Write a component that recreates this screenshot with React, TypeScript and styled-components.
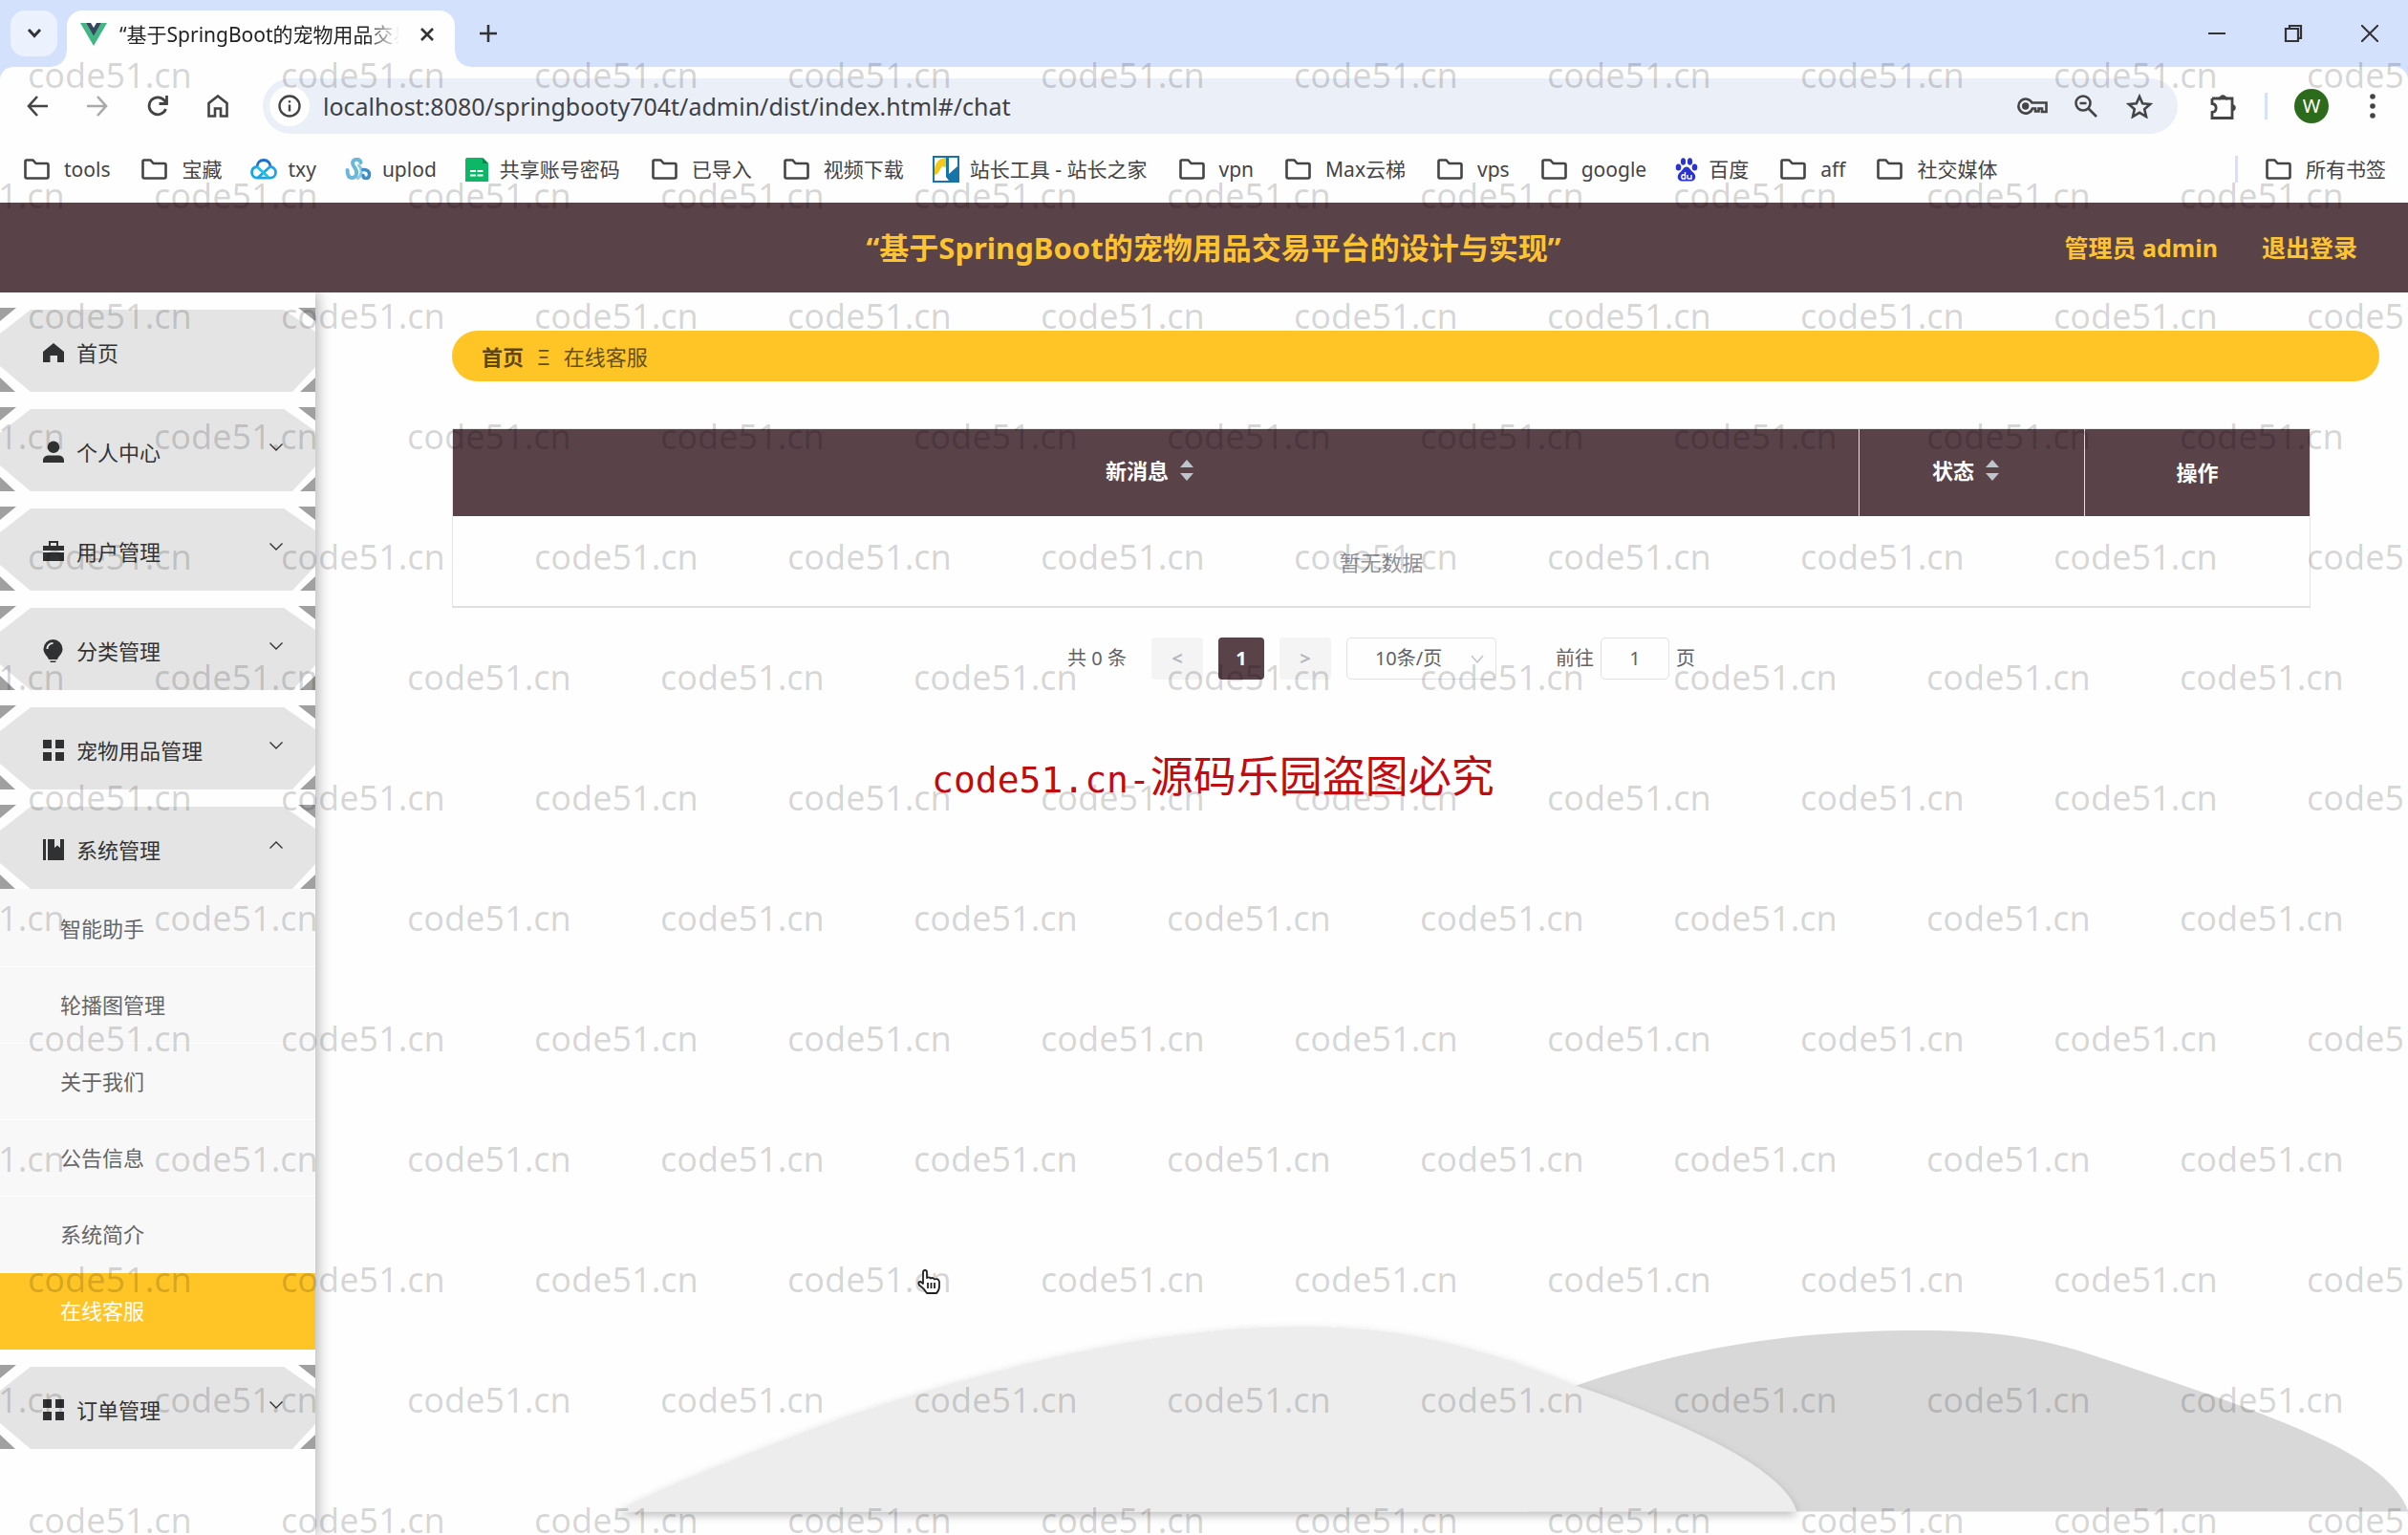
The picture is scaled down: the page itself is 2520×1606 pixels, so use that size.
import React from "react";
import styled, { createGlobalStyle, css } from "styled-components";

const plum = "#5a4249";
const gold = "#ffc526";

const GlobalStyle = createGlobalStyle`
  * { box-sizing: border-box; }
  body {
    margin: 0;
    background: #fefefe;
    font-family: "Noto Sans", "Noto Sans CJK SC", sans-serif;
    font-size: 22px;
    line-height: 32px;
    color: #333;
  }
  button, input, select { font: inherit; color: inherit; }
  button { padding: 0; border: 0; background: none; }
  a { color: inherit; text-decoration: none; }
  ul { margin: 0; padding: 0; list-style: none; }
  svg { display: block; flex: none; }
`;

const Page = styled.div`
  position: relative;
  display: flex;
  flex-direction: column;
  min-height: 100vh;
  overflow: hidden;
`;

/* ---------- browser chrome ---------- */

const TabStrip = styled.div`
  display: flex;
  align-items: flex-start;
  height: 70px;
  padding: 11px 0 0 11px;
  background: #d3e1fc;
`;

const TabSearch = styled.button`
  display: grid;
  place-items: center;
  width: 49px;
  height: 48px;
  margin-right: 10px;
  border-radius: 15px;
  background: #ebf2fe;
`;

const Tab = styled.div`
  position: relative;
  display: flex;
  align-items: center;
  width: 406px;
  height: 59px;
  padding: 0 18px 10px 14px;
  border-radius: 16px 16px 0 0;
  background: #fefefe;

  &::before, &::after {
    content: "";
    position: absolute;
    bottom: 0;
    width: 16px;
    height: 16px;
  }
  &::before {
    left: -16px;
    background: radial-gradient(circle at 0 0, transparent 15px, #fefefe 16px);
  }
  &::after {
    right: -16px;
    background: radial-gradient(circle at 100% 0, transparent 15px, #fefefe 16px);
  }
`;

const TabTitle = styled.span`
  flex: 1;
  margin: 0 18px 0 13px;
  overflow: hidden;
  white-space: nowrap;
  font-size: 21px;
  color: #222;
  mask-image: linear-gradient(90deg, #000 88%, transparent);
`;

const StripButton = styled.button`
  display: grid;
  place-items: center;
  width: ${(p: { $w: number }) => p.$w}px;
  height: 48px;
`;

const WindowControls = styled.div`
  display: flex;
  margin-left: auto;
`;

const ToolbarBack = styled.div`
  background: linear-gradient(#d3e1fc 20px, #fefefe 20px);
`;

const Toolbar = styled.div`
  display: flex;
  align-items: center;
  height: 82px;
  padding: 0 6px 0 7px;
  border-radius: 14px 14px 0 0;
  background: #fefefe;
  color: #444;
`;

const ToolButton = styled.button`
  display: grid;
  place-items: center;
  width: 63px;
  height: 48px;
`;

const Omnibox = styled.div`
  display: flex;
  flex: 1;
  align-items: center;
  height: 58px;
  margin: 0 16px;
  padding: 0 12px 0 7px;
  border-radius: 29px;
  background: #ebeff8;
`;

const SiteInfo = styled.button`
  display: grid;
  place-items: center;
  width: 42px;
  height: 42px;
  border-radius: 50%;
  background: #fefefe;
`;

const UrlInput = styled.input`
  flex: 1;
  min-width: 0;
  height: 48px;
  padding: 0 0 0 14px;
  border: 0;
  outline: 0;
  background: none;
  font-size: 25px;
  color: #3f4145;
`;

const OmniButton = styled.button`
  display: grid;
  place-items: center;
  width: 56px;
  height: 48px;
`;

const Divider = styled.span`
  width: 3px;
  height: 28px;
  background: #d3e1fc;
`;

const ProfileGroup = styled.div`
  display: flex;
  align-items: center;
  margin-left: 12px;
`;

const Avatar = styled.button`
  width: 36px;
  height: 36px;
  margin: 0 14px 0 28px;
  border-radius: 50%;
  background: #2c6a1c;
  color: #fff;
  font-size: 20px;
  line-height: 36px;
`;

const Bookmarks = styled.nav`
  display: flex;
  align-items: center;
  gap: 30px;
  height: 60px;
  padding: 0 23px 10px 22px;
  background: #fefefe;
`;

const Bookmark = styled.a<{ $folder?: boolean }>`
  display: flex;
  align-items: center;
  gap: 11px;
  font-size: 21px;
  white-space: nowrap;
  color: #444;
  ${(p) => p.$folder && css`
    gap: 15px;
    padding-left: 3px;
  `}
`;

const AllBookmarks = styled.div`
  display: flex;
  align-items: center;
  gap: 26px;
  margin-left: auto;
`;

/* ---------- application ---------- */

const AppHeader = styled.header`
  display: grid;
  grid-template-columns: 1fr auto 1fr;
  align-items: center;
  height: 94px;
  padding: 0 53px 0 73px;
  background: ${plum};
  color: #fcc431;
`;

const AppTitle = styled.h1`
  grid-column: 2;
  margin: 0;
  font-size: 31px;
  line-height: 44px;
  font-weight: 700;
`;

const UserLinks = styled.div`
  display: flex;
  justify-content: flex-end;
  gap: 46px;
  font-size: 25px;
  font-weight: 700;
`;

const Body = styled.div`
  display: flex;
  flex: 1;
`;

const Sidebar = styled.nav`
  position: relative;
  flex: none;
  width: 330px;
  background: #fefefe;
  box-shadow: 2px 0 14px rgba(0, 0, 0, 0.32);
  clip-path: inset(0 -30px 0 0);
`;

const MenuButton = styled.button`
  position: relative;
  display: flex;
  align-items: center;
  width: 100%;
  height: 88px;
  margin-top: 16px;
  padding: 6px 34px 0 44px;
  text-align: left;
`;

const PlateSvg = styled.svg`
  position: absolute;
  inset: 0;
  width: 100%;
  height: 100%;
`;

const MenuLabel = styled.span`
  position: relative;
  flex: 1;
  margin-left: 12px;
`;

const MenuIcon = styled.svg`
  position: relative;
  width: 24px;
  height: 24px;
`;

const MenuArrow = styled.svg<{ $open?: boolean }>`
  position: relative;
  width: 14px;
  height: 8px;
  margin-bottom: 10px;
  transform: ${(p) => (p.$open ? "rotate(180deg)" : "none")};
`;

const SubMenu = styled.ul`
  padding-top: 2px;
  background: #f8f8f8;
`;

const SubLink = styled.a<{ $active?: boolean }>`
  display: block;
  height: 80px;
  padding-left: 63px;
  line-height: 78px;
  border-bottom: 1px solid ${(p) => (p.$active ? gold : "#fefefe")};
  background: ${(p) => (p.$active ? gold : "transparent")};
  color: ${(p) => (p.$active ? "#fff" : "#666")};
`;

const Main = styled.main`
  display: flex;
  flex: 1;
  flex-direction: column;
`;

const Content = styled.div`
  padding: 40px 30px 0 143px;
`;

const Breadcrumb = styled.nav`
  display: flex;
  align-items: center;
  gap: 14px;
  height: 53px;
  padding: 0 31px;
  border-radius: 27px;
  background: ${gold};
  color: #66501f;
`;

const CrumbHome = styled.a`
  font-weight: 700;
  color: #614512;
`;

const Listing = styled.section`
  margin: 49px 72px 0 0;
`;

const Table = styled.table`
  width: 100%;
  table-layout: fixed;
  border-collapse: collapse;
  border: 1px solid #e6e6e6;
  border-bottom: 2px solid #e0e0e0;
`;

const HeadCell = styled.th`
  width: ${(p: { $w?: string }) => p.$w ?? "auto"};
  height: 91px;
  padding: 0;
  background: ${plum};
  color: #fff;
  font-weight: 700;
  & + & { border-left: 1px solid #e6e0e1; }
`;

const SortButton = styled.button`
  display: inline-flex;
  align-items: center;
  gap: 12px;
  padding: 0 13px 4px 0;
  font-weight: 700;
`;

const EmptyCell = styled.td`
  height: 95px;
  padding: 2px 0 0;
  text-align: center;
  color: #909399;
`;

const Pagination = styled.div`
  display: flex;
  align-items: center;
  justify-content: center;
  gap: 16px;
  margin-top: 31px;
  font-size: 20px;
  color: #606266;
`;

const Total = styled.span`
  margin-right: 10px;
`;

const PageButton = styled.button<{ $active?: boolean }>`
  display: grid;
  place-items: center;
  width: ${(p) => (p.$active ? 48 : 54)}px;
  height: 44px;
  border-radius: 4px;
  background: ${(p) => (p.$active ? plum : "#f4f4f5")};
  color: ${(p) => (p.$active ? "#fff" : "#b4b7bd")};
  font-weight: 700;
`;

const SizeBox = styled.label`
  position: relative;
  display: block;
  & > svg {
    position: absolute;
    right: 13px;
    top: 18px;
  }
`;

const SizeSelect = styled.select`
  appearance: none;
  width: 157px;
  height: 44px;
  padding: 0 0 0 29px;
  border: 1px solid #dfe1e6;
  border-radius: 5px;
  background: #fefefe;
`;

const Jump = styled.label`
  display: flex;
  align-items: center;
  gap: 7px;
  margin-left: 46px;
`;

const JumpInput = styled.input`
  width: 72px;
  height: 44px;
  padding: 0;
  border: 1px solid #dfe1e6;
  border-radius: 5px;
  background: #fefefe;
  text-align: center;
`;

const Hills = styled.svg`
  width: 86%;
  height: auto;
  margin-top: auto;
  align-self: flex-end;
`;

/* ---------- overlays ---------- */

const WatermarkLayer = styled.div`
  position: absolute;
  inset: 52px 0 0;
  overflow: hidden;
  pointer-events: none;
  user-select: none;
`;

const WatermarkRow = styled.div<{ $shift: boolean }>`
  display: flex;
  height: 126px;
  margin-left: ${(p) => (p.$shift ? -104 : 29)}px;
  font-size: 36px;
  line-height: 54px;
  color: rgba(0, 0, 0, 0.16);
  & > span { flex: 0 0 265px; }
`;

const Notice = styled.div`
  position: absolute;
  top: 782px;
  left: 975px;
  display: flex;
  align-items: baseline;
  font-size: 45px;
  line-height: 60px;
  white-space: nowrap;
  color: #c30a0f;
  pointer-events: none;
`;

const NoticeLatin = styled.span`
  font-family: "DejaVu Sans Mono", monospace;
  font-size: 38px;
`;

const HandPointer = styled.svg`
  position: absolute;
  top: 1327px;
  left: 959px;
`;

const stroke = { fill: "none", stroke: "currentColor" } as const;

const FolderIcon = () => (
  <svg width="27" height="22" viewBox="0 0 27 22" {...stroke} strokeWidth="2.6" strokeLinejoin="round">
    <path d="M1.5 19V2.8Q1.5 1.5 2.8 1.5H9.5L12.5 5H24Q25.5 5 25.5 6.5V19Q25.5 20.5 24 20.5H3Q1.5 20.5 1.5 19Z" />
  </svg>
);

const CloudIcon = () => (
  <svg width="28" height="22" viewBox="0 0 28 22" fill="none" strokeWidth="2.800" strokeLinejoin="round">
    <path d="M7 9C7 4 10 1.500 14 1.500S21 4.500 21 8.500" stroke="#1b6fd0" />
    <path d="M7 8.500C3 9 1.500 11.500 1.500 14.200c0 3.600 2.500 6 6 6L20.500 8.500c3.500 0 6 2.400 6 5.900 0 3.400-2.500 5.800-6 5.800h-13" stroke="#1aa5e8" />
    <path d="M7 8.500 19 19.500" stroke="#22bfe6" />
  </svg>
);

const UpIcon = () => (
  <svg width="28" height="24" viewBox="0 0 28 24" fill="none" strokeWidth="4" strokeLinecap="round">
    <path d="M2.500 13c0 5 1.500 8 5 8s5-3 4.500-7C11.500 10.500 8 9 8 5.500 8 1 15.500.5 16.500 5" stroke="#6bb7dc" />
    <path d="M14.500 8c2 2 3 5 2.500 8-.3 2.500-1.500 4-3.500 5.500" stroke="#8cc8e4" strokeWidth="3" />
    <path d="M19 12.500c4-.5 6.500 2 6.500 5 0 2.500-1.500 4-3.500 4s-3-1.200-3-3" stroke="#3d8fc8" strokeWidth="3.500" />
  </svg>
);

const SheetIcon = () => (
  <svg width="25" height="25" viewBox="0 0 25 25">
    <path d="M2 0H18L24 6V25H0V2Q0 0 2 0Z" fill="#0cb767" />
    <path d="M18 0 24 6H18Z" fill="#05884a" />
    <path d="M5 13h6v2H5zM12.500 13h6v2h-6zM5 17.500h6v2H5zM12.500 17.500h6v2h-6z" fill="#fff" />
  </svg>
);

const ZhanIcon = () => (
  <svg width="28" height="28" viewBox="0 0 28 28">
    <path d="M1 1H27V27H1Z" fill="#fff" stroke="#1674a8" strokeWidth="2" />
    <path d="M2 14C3 6 8 2 14 2V12L10 11 5 19 2 20Z" fill="#f2c81b" />
    <path d="M14 2H17V19L26 11V26H17L14 22Z" fill="#1674a8" />
  </svg>
);

const BaiduIcon = () => (
  <svg width="24" height="25" viewBox="0 0 24 25" fill="#2b32d4">
    <ellipse cx="3.500" cy="10" rx="2.800" ry="3.500" />
    <ellipse cx="8.500" cy="4" rx="2.600" ry="3.800" />
    <ellipse cx="15.500" cy="4" rx="2.600" ry="3.800" />
    <ellipse cx="20.500" cy="10" rx="2.800" ry="3.500" />
    <path d="M12 9.500c3 0 4 3.500 6.500 5.500 5 4 2.500 9.500-1.500 9.500H7c-4 0-6.500-5.500-1.500-9.500C8 13 9 9.500 12 9.500Z" />
    <path d="M10.500 15v7H7.500q-1.500-2 0-4h3M13 18v3q0 1 1 1h3v-4" fill="none" stroke="#fff" strokeWidth="1.500" />
  </svg>
);

type BookmarkEntry = { label: string; icon?: () => React.ReactElement };

const bookmarks: BookmarkEntry[] = [
  { label: "tools" },
  { label: "宝藏" },
  { label: "txy", icon: CloudIcon },
  { label: "uplod", icon: UpIcon },
  { label: "共享账号密码", icon: SheetIcon },
  { label: "已导入" },
  { label: "视频下载" },
  { label: "站长工具 - 站长之家", icon: ZhanIcon },
  { label: "vpn" },
  { label: "Max云梯" },
  { label: "vps" },
  { label: "google" },
  { label: "百度", icon: BaiduIcon },
  { label: "aff" },
  { label: "社交媒体" },
];

const homePath = "M12 2 23 11V22H16V15H8.500V22H1V11Z";
const userPath = "M12 0.500a6 6 0 0 1 0 12.500a6 6 0 0 1 0-12.500ZM1 23v-2c0-4 3-5.500 6-5.500h10c3 0 6 1.500 6 5.500v2Z";
const casePath = "M7 6V1H17V6H23V11H1V6ZM9 6h6V3H9ZM1 13H23V22H1Z";
const bulbPath = "M11.500 0a10 10 0 0 1 10 10c0 5-4 7-5.500 11H7C5.500 17 1.500 15 1.500 10a10 10 0 0 1 10-10ZM4.500 10h2c0-3 2-5 5-5V3c-4 0-7 3-7 7ZM8 22.500h7l-1.500 2h-4Z";
const gridPath = "M1 1H10V10H1ZM14 1H23V10H14ZM1 14H10V23H1ZM14 14H23V23H14Z";
const bookPath = "M1 1H4V23H1ZM6 1H13V10L16 7.500 19 10V1H23V23H6Z";

type MenuEntry = { label: string; path: string; leaf?: boolean; children?: string[] };

const menu: MenuEntry[] = [
  { label: "首页", path: homePath, leaf: true },
  { label: "个人中心", path: userPath },
  { label: "用户管理", path: casePath },
  { label: "分类管理", path: bulbPath },
  { label: "宠物用品管理", path: gridPath },
  {
    label: "系统管理",
    path: bookPath,
    children: ["智能助手", "轮播图管理", "关于我们", "公告信息", "系统简介", "在线客服"],
  },
  { label: "订单管理", path: gridPath },
];

const Plate = () => (
  <PlateSvg viewBox="0 0 330 88" preserveAspectRatio="none" aria-hidden>
    <path d="M32 2H297L330 25V62L306 88H32L0 61V27Z" fill="#e4e4e4" />
    <path d="M0 0H17L0 14ZM312 0H330V14ZM0 73 16 88H0ZM330 73V88H314Z" fill="#a0a0a0" />
  </PlateSvg>
);

const SortCarets = () => (
  <svg width="14" height="22" viewBox="0 0 14 22" fill="#c0c4cc">
    <path d="M7 0 14 8H0ZM0 14H14L7 22Z" />
  </svg>
);

const watermarkRows = Array.from({ length: 13 }, (_, i) => i);
const watermarkCols = Array.from({ length: 10 }, (_, i) => i);

function BrowserChrome() {
  return (
    <>
      <TabStrip>
        <TabSearch aria-label="搜索标签页">
          <svg width="16" height="12" viewBox="0 0 16 12" {...stroke} strokeWidth="3"><path d="M2 2 8 8.500 14 2" /></svg>
        </TabSearch>
        <Tab>
          <svg width="28" height="24" viewBox="0 0 28 24">
            <path d="M0 0H6L14 14 22 0H28L14 24Z" fill="#41b883" />
            <path d="M6 0H11L14 5 17 0H22L14 14Z" fill="#34495e" />
          </svg>
          <TabTitle>“基于SpringBoot的宠物用品交易平台</TabTitle>
          <button aria-label="关闭标签页">
            <svg width="22" height="16" viewBox="0 0 22 16" {...stroke} strokeWidth="2.600"><path d="m5 2 12 12M17 2 5 14" /></svg>
          </button>
        </Tab>
        <StripButton $w={70} aria-label="新建标签页">
          <svg width="18" height="18" viewBox="0 0 18 18" {...stroke} strokeWidth="2.600"><path d="M9 0V18M0 9H18" /></svg>
        </StripButton>
        <WindowControls>
          <StripButton $w={80} aria-label="最小化">
            <svg width="18" height="18" viewBox="0 0 18 18" {...stroke} strokeWidth="2"><path d="M0 9H18" /></svg>
          </StripButton>
          <StripButton $w={80} aria-label="还原">
            <svg width="20" height="20" viewBox="0 0 20 20" {...stroke} strokeWidth="2.200"><path d="M2 5H15V18H2ZM6 4V2H18V15H16" /></svg>
          </StripButton>
          <StripButton $w={80} aria-label="关闭">
            <svg width="18" height="18" viewBox="0 0 18 18" {...stroke} strokeWidth="2"><path d="m0 0 18 18M18 0 0 18" /></svg>
          </StripButton>
        </WindowControls>
      </TabStrip>

      <ToolbarBack>
        <Toolbar>
          <ToolButton aria-label="后退">
            <svg width="22" height="22" viewBox="0 0 22 22" {...stroke} strokeWidth="2.600"><path d="M22 11H2M11 1 2 11 11 21" /></svg>
          </ToolButton>
          <ToolButton aria-label="前进" disabled>
            <svg width="22" height="22" viewBox="0 0 22 22" fill="none" stroke="#a9a9a9" strokeWidth="2.600"><path d="M0 11H20M11 1 20 11 11 21" /></svg>
          </ToolButton>
          <ToolButton aria-label="重新加载">
            <svg width="22" height="22" viewBox="0 0 22 22" {...stroke} strokeWidth="2.800"><path d="M19.500 14A9 9 0 1 1 18 5L20 8M20.500 0V8.500H12.500" /></svg>
          </ToolButton>
          <ToolButton aria-label="主页">
            <svg width="22" height="24" viewBox="0 0 22 24" {...stroke} strokeWidth="2.600"><path d="M1.500 22.500V9L11 1.500 20.500 9V22.500H14V14.500H8V22.500Z" /></svg>
          </ToolButton>
          <Omnibox>
            <SiteInfo aria-label="网站信息">
              <svg width="24" height="24" viewBox="0 0 24 24" {...stroke} strokeWidth="2.400"><circle cx="12" cy="12" r="10.500" /><path d="M12 10.500V17.500M12 6.200V8.600" /></svg>
            </SiteInfo>
            <UrlInput aria-label="地址" defaultValue="localhost:8080/springbooty704t/admin/dist/index.html#/chat" />
            <OmniButton aria-label="密码">
              <svg width="32" height="20" viewBox="0 0 32 20" {...stroke} strokeWidth="2.600">
                <path d="M15.500 6.500H30.500V16H26V12.500H22.500V15.500H19V12.500H16A7.500 7.500 0 1 1 15.500 6.500Z" />
                <circle cx="8.700" cy="10" r="2.400" fill="currentColor" />
              </svg>
            </OmniButton>
            <OmniButton aria-label="缩放">
              <svg width="24" height="24" viewBox="0 0 24 24" {...stroke} strokeWidth="2.600"><circle cx="9" cy="9" r="7.500" /><path d="M14.500 14.500 23 23M5.500 9H12.500" /></svg>
            </OmniButton>
            <OmniButton aria-label="为此标签页添加书签">
              <svg width="28" height="26" viewBox="0 0 28 26" {...stroke} strokeWidth="2.600"><path d="m14 3 3.200 7.300 8 .7-6 5.200 1.800 7.800-7-4.200-7 4.200 1.800-7.800-6-5.200 8-.7Z" /></svg>
            </OmniButton>
          </Omnibox>
          <ToolButton aria-label="扩展程序">
            <svg width="30" height="29" viewBox="0 0 30 29" {...stroke} strokeWidth="2.800">
              <path d="M3 6H11.500M17 6H24V26.500H3V20.500C8.500 20 8.500 12 3 11.500V6" />
              <path d="M10.500 6a3.800 4.500 0 0 1 7.500 0ZM24 12a4.500 3.800 0 0 1 0 7.500Z" fill="currentColor" stroke="none" />
              <path d="M10 6H19" />
            </svg>
          </ToolButton>
          <ProfileGroup>
            <Divider />
            <Avatar aria-label="个人资料">W</Avatar>
            <ToolButton aria-label="菜单">
              <svg width="6" height="26" viewBox="0 0 6 26" fill="currentColor"><circle cx="3" cy="3" r="2.800" /><circle cx="3" cy="13" r="2.800" /><circle cx="3" cy="23" r="2.800" /></svg>
            </ToolButton>
          </ProfileGroup>
        </Toolbar>
      </ToolbarBack>

      <Bookmarks aria-label="书签">
        {bookmarks.map(({ label, icon: Icon }) => (
          <Bookmark key={label} href="#" $folder={!Icon}>
            {Icon ? <Icon /> : <FolderIcon />}
            {label}
          </Bookmark>
        ))}
        <AllBookmarks>
          <Divider />
          <Bookmark href="#" $folder>
            <FolderIcon />
            所有书签
          </Bookmark>
        </AllBookmarks>
      </Bookmarks>
    </>
  );
}

function SideMenu() {
  return (
    <Sidebar aria-label="导航">
      {menu.map(({ label, path, leaf, children }) => (
        <React.Fragment key={label}>
          <MenuButton>
            <Plate />
            <MenuIcon viewBox="0 0 24 24" fill="#303133" fillRule="evenodd"><path d={path} /></MenuIcon>
            <MenuLabel>{label}</MenuLabel>
            {!leaf && (
              <MenuArrow $open={!!children} viewBox="0 0 14 8" {...stroke} strokeWidth="1.400"><path d="M0.500 0.500 7 7 13.500 0.500" /></MenuArrow>
            )}
          </MenuButton>
          {children && (
            <SubMenu>
              {children.map((child) => (
                <li key={child}><SubLink href="#/chat" $active={child === "在线客服"}>{child}</SubLink></li>
              ))}
            </SubMenu>
          )}
        </React.Fragment>
      ))}
    </Sidebar>
  );
}

function Landscape() {
  return (
    <Hills viewBox="640 1370 1880 236" aria-hidden>
      <defs>
        <filter id="hillShadow" x="-5%" y="-15%" width="110%" height="130%">
          <feDropShadow dx="0" dy="4" stdDeviation="5" floodColor="#000" floodOpacity="0.25" />
        </filter>
      </defs>
      <path d="M1600 1470L1652 1449C1760 1412 1870 1392 2010 1392C2090 1392 2140 1400 2203 1422C2270 1444 2340 1468 2387 1487C2448 1512 2505 1540 2520 1581H1600Z" fill="#d8d8d8" />
      <path d="M648 1581C700 1553 791 1518 887 1482C1040 1432 1200 1388 1365 1388C1450 1388 1510 1402 1560 1417C1594 1427 1625 1439 1652 1450C1684 1461 1714 1472 1744 1485C1810 1513 1872 1548 1881 1581Z" fill="#ededed" filter="url(#hillShadow)" />
    </Hills>
  );
}

export default function App() {
  return (
    <Page>
      <GlobalStyle />
      <BrowserChrome />

      <AppHeader>
        <AppTitle>“基于SpringBoot的宠物用品交易平台的设计与实现”</AppTitle>
        <UserLinks>
          <span>管理员 admin</span>
          <a href="#/login">退出登录</a>
        </UserLinks>
      </AppHeader>

      <Body>
        <SideMenu />
        <Main>
          <Content>
            <Breadcrumb aria-label="面包屑">
              <CrumbHome href="#/">首页</CrumbHome>
              <span>Ξ</span>
              <span>在线客服</span>
            </Breadcrumb>

            <Listing>
              <Table>
                <thead>
                  <tr>
                    <HeadCell><SortButton>新消息<SortCarets /></SortButton></HeadCell>
                    <HeadCell $w="236px"><SortButton>状态<SortCarets /></SortButton></HeadCell>
                    <HeadCell $w="236px">操作</HeadCell>
                  </tr>
                </thead>
                <tbody>
                  <tr><EmptyCell colSpan={3}>暂无数据</EmptyCell></tr>
                </tbody>
              </Table>

              <Pagination>
                <Total>共 0 条</Total>
                <PageButton disabled aria-label="上一页">&lt;</PageButton>
                <PageButton $active>1</PageButton>
                <PageButton disabled aria-label="下一页">&gt;</PageButton>
                <SizeBox>
                  <SizeSelect aria-label="每页条数" defaultValue="10">
                    <option value="10">10条/页</option>
                  </SizeSelect>
                  <svg width="14" height="9" viewBox="0 0 14 9" fill="none" stroke="#c0c4cc" strokeWidth="1.500"><path d="M1 1 7 8 13 1" /></svg>
                </SizeBox>
                <Jump>
                  前往
                  <JumpInput defaultValue="1" />
                  页
                </Jump>
              </Pagination>
            </Listing>
          </Content>
          <Landscape />
        </Main>
      </Body>

      <WatermarkLayer aria-hidden>
        {watermarkRows.map((row) => (
          <WatermarkRow key={row} $shift={row % 2 === 1}>
            {watermarkCols.map((col) => <span key={col}>code51.cn</span>)}
          </WatermarkRow>
        ))}
      </WatermarkLayer>

      <Notice><NoticeLatin>code51.cn-</NoticeLatin>源码乐园盗图必究</Notice>

      <HandPointer width="26" height="28" viewBox="0 0 26 28" fill="#fff" stroke="#222" strokeWidth="1.800" strokeLinejoin="round" aria-hidden>
        <path d="M7 16V4Q7 2 9 2T11 4V10Q13 8.500 15 10.500Q17 9 19 11.500Q23 10 24 14V19Q24 23 21 26H11Q8 21 3 17.500Q1 14 4.500 14Z" />
        <path d="M12 15V21M15.500 15V21M19 15V21" />
      </HandPointer>
    </Page>
  );
}
